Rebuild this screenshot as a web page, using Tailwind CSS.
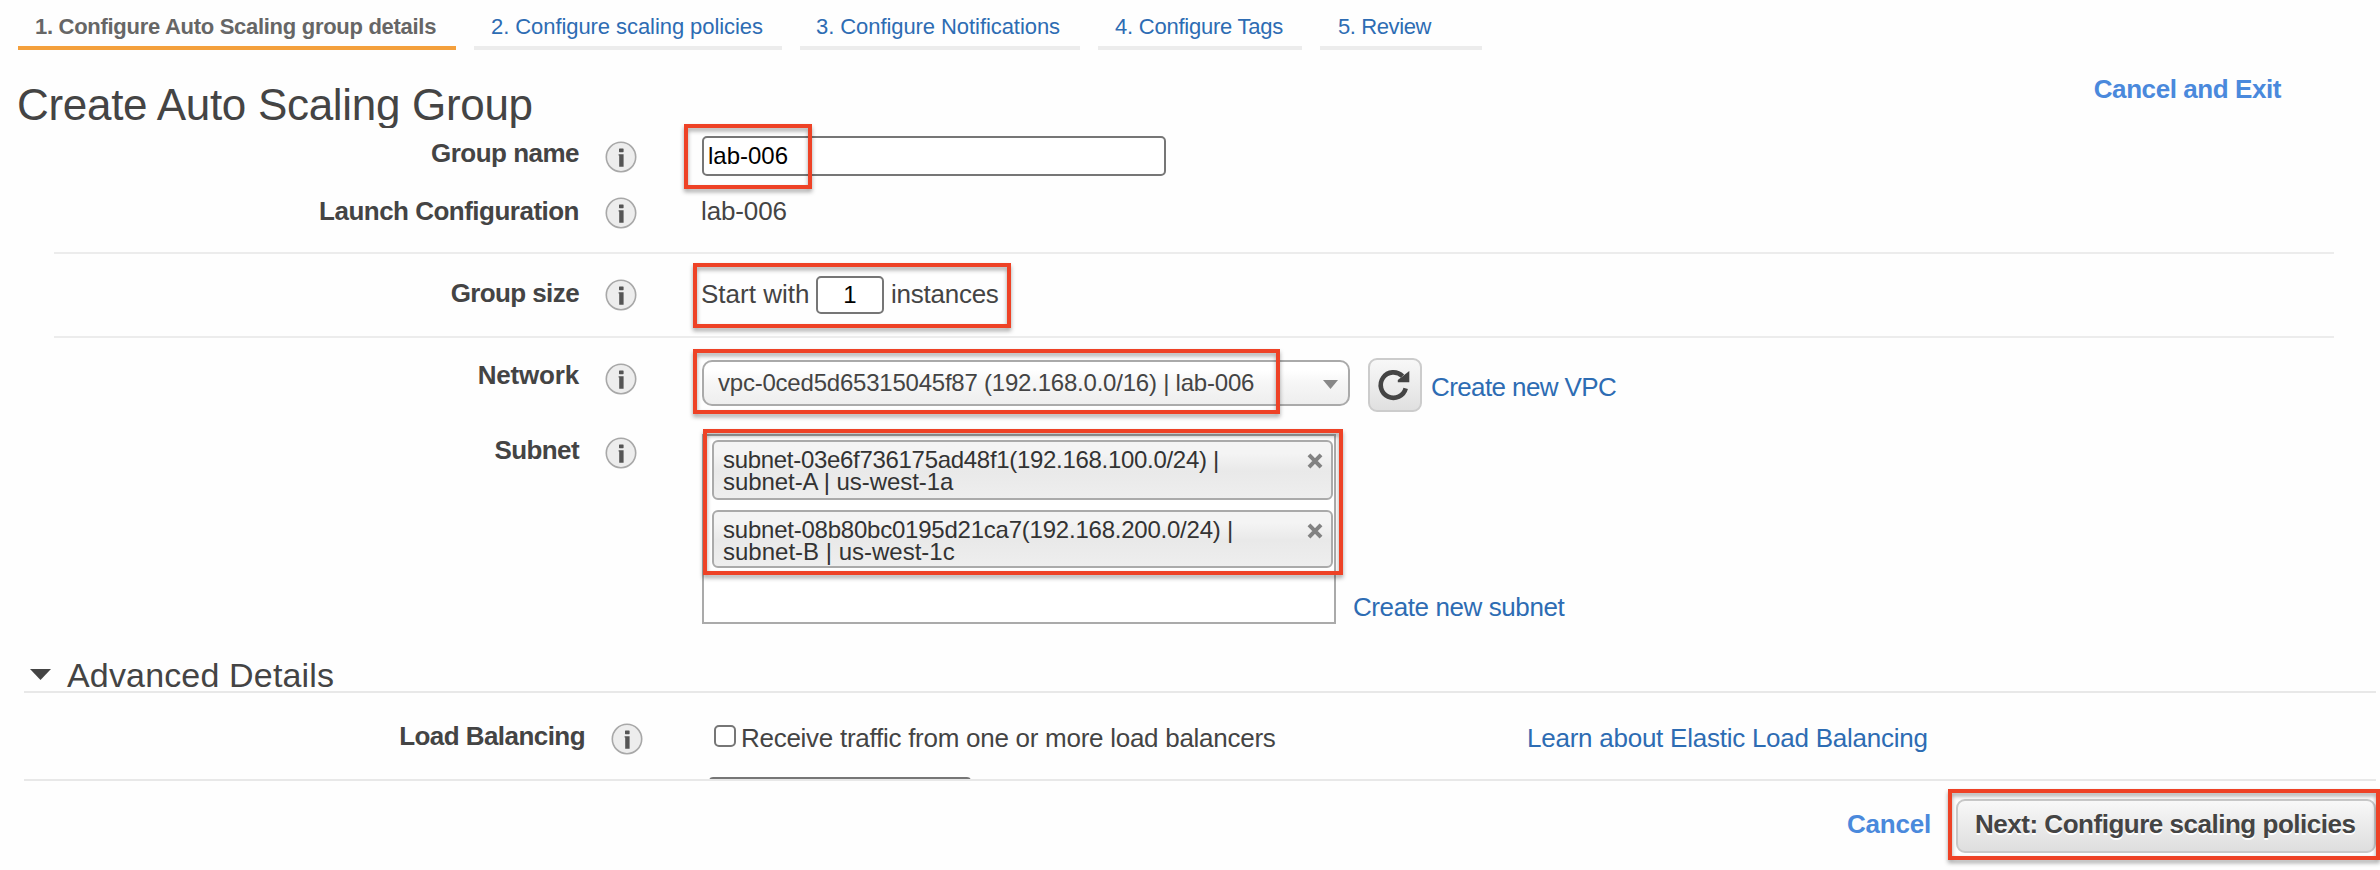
<!DOCTYPE html>
<html lang="en">
<head>
<meta charset="utf-8">
<title>Create Auto Scaling Group</title>
<script src="https://cdn.jsdelivr.net/npm/@tailwindcss/browser@4"></script>
</head>
<body class="bg-[#fefefe]">
<svg class="hidden">
  <symbol id="info" viewBox="0 0 32 32">
    <circle cx="16" cy="16" r="14.7" fill="#ededed" stroke="#a8a8a8" stroke-width="1.6"/>
    <rect x="14" y="7.4" width="4.6" height="3.8" rx=".6" fill="#555"/>
    <path d="M13.6 13.2h5v12.6h-4.4V14.6h-.6z" fill="#555"/>
  </symbol>
  <symbol id="cross" viewBox="0 0 16 16">
    <path d="M2 1.800 14 14.200M14 1.800 2 14.200" stroke="#828282" stroke-width="4"/>
  </symbol>
</svg>
<div class="relative w-[2380px] h-[870px] overflow-hidden font-['Liberation_Sans',Arial,sans-serif] text-[26px] leading-[30px] text-[#444] whitespace-nowrap">

  <nav class="flex gap-[18px] pl-[18px] text-[22px] text-[#2d6cb3]">
    <a class="w-[438px] h-[50px] pt-3 pl-[17px] border-b-4 border-[#f4a03c] font-bold text-[#666] tracking-[-0.287px]">1. Configure Auto Scaling group details</a>
    <a class="w-[308px] h-[50px] pt-3 pl-[17px] border-b-4 border-[#ececec] tracking-[-0.069px]">2. Configure scaling policies</a>
    <a class="w-[280px] h-[50px] pt-3 pl-[16px] border-b-4 border-[#ececec] tracking-[-0.07px]">3. Configure Notifications</a>
    <a class="w-[204px] h-[50px] pt-3 pl-[17px] border-b-4 border-[#ececec] tracking-[-0.24px]">4. Configure Tags</a>
    <a class="w-[162px] h-[50px] pt-3 pl-[18px] border-b-4 border-[#ececec] tracking-[-0.4px]">5. Review</a>
  </nav>

  <header class="flex justify-between h-[78px] pl-[17px] pr-[99px] overflow-hidden">
    <h1 class="pt-[25px] text-[44px] leading-[60px] tracking-[-0.308px]">Create Auto Scaling Group</h1>
    <a class="pt-6 font-bold text-[#4a89dc] tracking-[-0.426px]">Cancel and Exit</a>
  </header>

  <main>
    <div class="flex h-14">
      <div class="w-[579px] mt-[10px] text-right font-bold tracking-[-0.519px]">Group name</div>
      <svg class="size-8 ml-[26px] mt-[13px]"><use href="#info"/></svg>
      <div class="ml-[65px] mt-2 w-[464px] h-10 border-2 border-[#767676] rounded-[5px] bg-white pl-1 pt-[3px] text-[24px] text-black">lab-006</div>
    </div>
    <div class="flex h-[68px]">
      <div class="w-[579px] mt-3 text-right font-bold tracking-[-0.51px]">Launch Configuration</div>
      <svg class="size-8 ml-[26px] mt-[13px]"><use href="#info"/></svg>
      <div class="ml-[64px] mt-3 tracking-[-0.129px]">lab-006</div>
    </div>
    <div class="ml-[54px] w-[2280px] h-0.5 bg-[#ececec]"></div>
    <div class="flex h-[82px]">
      <div class="w-[579px] mt-6 text-right font-bold tracking-[-0.599px]">Group size</div>
      <svg class="size-8 ml-[26px] mt-[25px]"><use href="#info"/></svg>
      <div class="ml-[64px] w-[115px] mt-[25px]">Start with</div>
      <div class="w-[68px] h-[38px] mt-[22px] border-2 border-[#767676] rounded-[5px] bg-white text-center text-[24px] leading-[34px] text-black">1</div>
      <div class="ml-[7px] mt-[25px] tracking-[-0.25px]">instances</div>
    </div>
    <div class="ml-[54px] w-[2280px] h-0.5 bg-[#ececec]"></div>
    <div class="flex h-24">
      <div class="w-[579px] mt-[22px] text-right font-bold tracking-[-0.186px]">Network</div>
      <svg class="size-8 ml-[26px] mt-[25px]"><use href="#info"/></svg>
      <div class="ml-[65px] mt-[22px] w-[648px] h-[46px] flex justify-between border-2 border-[#aaa] rounded-[10px] bg-linear-to-b from-white from-20% via-[#f6f6f6] via-50% to-[#eee] pl-[14px] pr-[10px] pt-[6px] text-[24px]">
        <span class="tracking-[-0.219px]">vpc-0ced5d65315045f87 (192.168.0.0/16) | lab-006</span>
        <svg class="w-[15px] h-[9px] mt-[12px]" viewBox="0 0 15 9"><path d="M0 0h15L7.500 9z" fill="#888"/></svg>
      </div>
      <div class="ml-[18px] mt-5 size-[54px] border-2 border-[#ccc] rounded-[9px] bg-linear-to-b from-[#f8f8f8] to-[#e0e0e0] flex items-center justify-center">
        <svg class="size-9" viewBox="0 0 36 36"><path d="M28.700 21.300A12.700 12.700 0 1 1 25.500 9.200" fill="none" stroke="#444" stroke-width="4.600"/><path d="M32.300 4V15.300H20.800V13z" fill="#444"/></svg>
      </div>
      <a class="ml-[9px] mt-[34px] text-[#2d6cb3] tracking-[-0.6px]">Create new VPC</a>
    </div>
    <div class="flex h-[204px]">
      <div class="w-[579px] mt-px text-right font-bold tracking-[-0.6px]">Subnet</div>
      <svg class="size-8 ml-[26px] mt-[3px]"><use href="#info"/></svg>
      <div class="ml-[65px] w-[634px] h-[190px] border-2 border-[#aaa] bg-white pl-2 pt-1 text-[24px] leading-[22px] text-[#333]">
        <div class="flex justify-between w-[621px] h-[60px] border-2 border-[#aaa] rounded-[6px] bg-linear-to-b from-[#f4f4f4] from-20% via-[#e9e9e9] via-52% to-[#eee] pl-[9px] pr-2 pt-[7px]">
          <div>
            <div class="tracking-[-0.305px]">subnet-03e6f736175ad48f1(192.168.100.0/24) |</div>
            <div class="tracking-[-0.07px]">subnet-A | us-west-1a</div>
          </div>
          <svg class="size-4 mt-1"><use href="#cross"/></svg>
        </div>
        <div class="mt-[10px] flex justify-between w-[621px] h-[58px] border-2 border-[#aaa] rounded-[6px] bg-linear-to-b from-[#f4f4f4] from-20% via-[#e9e9e9] via-52% to-[#eee] pl-[9px] pr-2 pt-[7px]">
          <div>
            <div class="tracking-[-0.227px]">subnet-08b80bc0195d21ca7(192.168.200.0/24) |</div>
            <div>subnet-B | us-west-1c</div>
          </div>
          <svg class="size-4 mt-1"><use href="#cross"/></svg>
        </div>
      </div>
      <a class="ml-[17px] mt-[158px] text-[#2d6cb3] tracking-[-0.408px]">Create new subnet</a>
    </div>
  </main>

  <section class="ml-6 w-[2352px]">
    <div class="flex h-[55px] border-b-2 border-[#e8e8e8]">
      <svg class="w-[21px] h-[11px] ml-[6px] mt-[31px]" viewBox="0 0 21 11"><path d="M0 0h21L10.500 11z" fill="#444"/></svg>
      <h2 class="ml-4 mt-[17px] text-[34px] leading-10 tracking-[0.16px]">Advanced Details</h2>
    </div>
    <div class="flex h-[86px] overflow-hidden">
      <div class="w-[561px] mt-7 text-right font-bold tracking-[-0.554px]">Load Balancing</div>
      <svg class="size-8 ml-[26px] mt-[30px]"><use href="#info"/></svg>
      <div class="ml-[66px] w-[818px]">
        <div class="flex pl-[5px]">
          <div class="size-[22px] mt-8 border-2 border-[#767676] rounded-[5px] bg-white"></div>
          <div class="ml-[5px] mt-[30px] tracking-[-0.27px]">Receive traffic from one or more load balancers</div>
        </div>
        <div class="mt-6 w-[262px] h-10 border-2 border-[#767676] rounded-[4px]"></div>
      </div>
      <a class="mt-[30px] text-[#2d6cb3] tracking-[-0.246px]">Learn about Elastic Load Balancing</a>
    </div>
    <footer class="flex justify-end border-t-2 border-[#e8e8e8] font-bold">
      <a class="mt-7 mr-[25px] text-[#4a89dc] tracking-[-0.2px]">Cancel</a>
      <div class="mt-[18px] w-[420px] h-[54px] border-2 border-[#c8c8c8] rounded-[9px] bg-linear-to-b from-[#f8f8f8] to-[#dedede] pl-[17px] pt-2 text-shadow-[0_2px_0_#fff] tracking-[-0.48px]">Next: Configure scaling policies</div>
    </footer>
  </section>

  <!-- Highlight frames -->
  <div class="absolute left-[684px] top-[124px] w-[128px] h-[65px] border-4 border-[#ee4226] drop-shadow-[0_3px_2px_rgba(0,0,0,0.35)]"></div>
  <div class="absolute left-[693px] top-[263px] w-[318px] h-[65px] border-4 border-[#ee4226] drop-shadow-[0_3px_2px_rgba(0,0,0,0.35)]"></div>
  <div class="absolute left-[693px] top-[349px] w-[587px] h-[65px] border-4 border-[#ee4226] drop-shadow-[0_3px_2px_rgba(0,0,0,0.35)]"></div>
  <div class="absolute left-[703px] top-[429px] w-[640px] h-[146px] border-4 border-[#ee4226] drop-shadow-[0_3px_2px_rgba(0,0,0,0.35)]"></div>
  <div class="absolute left-[1948px] top-[789px] w-[432px] h-[71px] border-4 border-[#ee4226] drop-shadow-[0_3px_2px_rgba(0,0,0,0.35)]"></div>
</div>
</body>
</html>
